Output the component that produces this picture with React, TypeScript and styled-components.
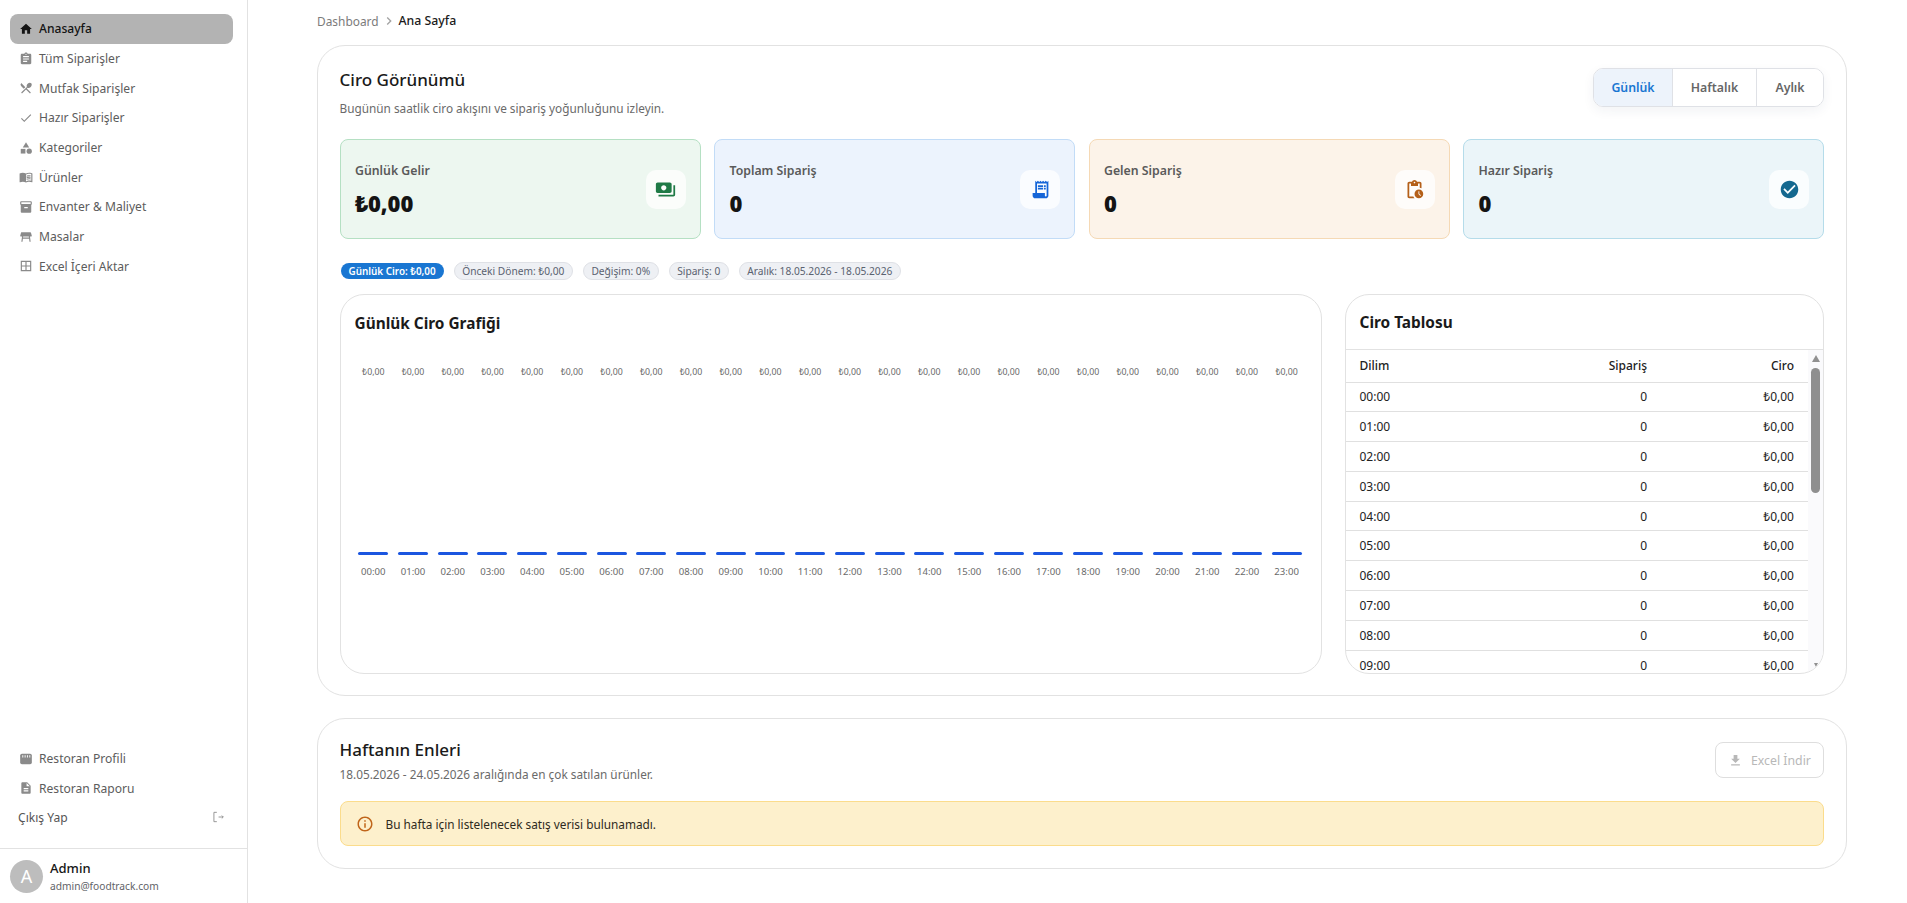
import React from 'react'
import styled, { createGlobalStyle } from 'styled-components'
import {
  MdHome,
  MdAssignment,
  MdRestaurantMenu,
  MdCheck,
  MdCategory,
  MdMenuBook,
  MdInventory2,
  MdTableRestaurant,
  MdBorderAll,
  MdDescription,
  MdPayments,
  MdReceiptLong,
  MdPendingActions,
  MdCheckCircle,
  MdInfoOutline,
  MdDownload,
  MdChevronRight,
} from 'react-icons/md'

const GlobalStyle = createGlobalStyle`
  html, body {
    margin: 0;
    height: 100%;
    overflow: hidden;
    background: #fff;
    font-family: "Noto Sans", "Open Sans", "Liberation Sans", sans-serif;
    color: #1c1c1c;
  }
  * {
    box-sizing: border-box;
  }
`

const Page = styled.div`
  display: flex;
  height: 903px;
`

const Sidebar = styled.aside`
  flex: 0 0 248px;
  display: flex;
  flex-direction: column;
  border-right: 1px solid #e2e2e2;
`

const NavList = styled.nav`
  display: flex;
  flex-direction: column;
  padding: 14px 14px 0 10px;
`

const BottomNav = styled(NavList)`
  margin-top: auto;
  padding-top: 0;
  padding-bottom: 16px;
`

const NavItem = styled.a<{ $active?: boolean }>`
  display: flex;
  align-items: center;
  gap: 6px;
  height: 29.7px;
  padding-left: 9px;
  border-radius: 8px;
  font-size: 12.1px;
  color: ${(p) => (p.$active ? '#141414' : '#5c5c5c')};
  background: ${(p) => (p.$active ? '#b3b3b3' : 'transparent')};
  font-weight: ${(p) => (p.$active ? 500 : 400)};
  svg {
    flex: none;
    font-size: 14px;
    color: ${(p) => (p.$active ? '#141414' : '#8a8a8a')};
  }
`

const LogoutRow = styled(NavItem)`
  justify-content: space-between;
  padding: 0 8px 0 8px;
  color: #555;
  margin-top: -1px;
`

const UserBlock = styled.div`
  display: flex;
  align-items: center;
  gap: 7px;
  height: 55px;
  padding: 0 10px;
  border-top: 1px solid #e2e2e2;
`

const Avatar = styled.div`
  flex: none;
  display: flex;
  align-items: center;
  justify-content: center;
  width: 33px;
  height: 33px;
  border-radius: 50%;
  background: #bdbdbd;
  color: #fff;
  font-size: 18px;
`

const UserName = styled.div`
  padding-top: 2px;
  font-size: 13px;
  font-weight: 500;
  line-height: 18px;
  color: #151515;
`

const UserMail = styled.div`
  font-size: 10.2px;
  line-height: 18px;
  color: #5f6368;
`

const Main = styled.main`
  flex: 1;
  min-width: 0;
  padding: 12px 60px 0 69px;
`

const Breadcrumb = styled.div`
  display: flex;
  align-items: center;
  height: 17px;
  margin-bottom: 16px;
  font-size: 11.9px;
  color: #7b7b7b;
  svg {
    margin: 0 2px;
    font-size: 16px;
    color: #a3a3a3;
  }
`

const Crumb = styled.span`
  font-size: 12.3px;
  color: #1b1b1b;
  font-weight: 500;
`

const Section = styled.section`
  border: 1px solid #e2e2e2;
  border-radius: 28px;
  padding: 22px 22px 21px 21.5px;
  background: #fff;
`

const WeeklySection = styled(Section)`
  margin-top: 22px;
  padding-top: 19px;
  padding-bottom: 22px;
`

const SectionHead = styled.header`
  display: flex;
  align-items: flex-start;
  justify-content: space-between;
`

const SectionTitle = styled.h2`
  margin: 0;
  font-size: 17px;
  line-height: 24px;
  font-weight: 500;
  color: #1a1a1a;
`

const SectionNote = styled.p<{ $gap: number }>`
  margin: ${(p) => p.$gap}px 0 0;
  font-size: 11.8px;
  line-height: 16px;
  color: #6a6a6a;
`

const Segment = styled.div`
  display: flex;
  height: 39px;
  border: 1px solid #dfe1e6;
  border-radius: 10px;
  overflow: hidden;
  box-shadow: 0 4px 12px rgba(30, 50, 90, 0.06);
`

const SegmentButton = styled.button<{ $active?: boolean; $width: number }>`
  width: ${(p) => p.$width}px;
  padding: 0;
  border: 0;
  border-left: 1px solid #dfe1e6;
  background: ${(p) => (p.$active ? '#edf3fb' : '#fff')};
  color: ${(p) => (p.$active ? '#1976d2' : '#666')};
  font: inherit;
  font-size: 12.3px;
  font-weight: 600;
  &:first-child {
    border-left: 0;
  }
`

const StatGrid = styled.div`
  display: grid;
  grid-template-columns: repeat(4, 1fr);
  gap: 13.5px;
  margin-top: 23px;
`

const tones = {
  green: { bg: '#edf7f0', line: '#b5e0c3', icon: '#1f7a46' },
  blue: { bg: '#ecf3fd', line: '#c2dcf7', icon: '#1565d8' },
  orange: { bg: '#fcf3e9', line: '#f5d9b5', icon: '#b45f18' },
  teal: { bg: '#ebf5f9', line: '#b5dcea', icon: '#14688f' },
}

type Tone = keyof typeof tones

const StatCard = styled.div<{ $tone: Tone }>`
  display: flex;
  align-items: center;
  justify-content: space-between;
  height: 100px;
  padding: 0 14px 0 14.5px;
  border: 1px solid ${(p) => tones[p.$tone].line};
  border-radius: 8px;
  background: ${(p) => tones[p.$tone].bg};
`

const StatLabel = styled.div`
  font-size: 12.3px;
  font-weight: 600;
  line-height: 17px;
  color: #5a5a5a;
`

const StatValue = styled.div`
  margin-top: 11px;
  font-size: 22px;
  font-weight: 900;
  line-height: 27px;
  color: #141414;
`

const StatIcon = styled.div<{ $tone: Tone }>`
  display: flex;
  align-items: center;
  justify-content: center;
  width: 40px;
  height: 39px;
  margin-top: 1px;
  border-radius: 10px;
  background: rgba(255, 255, 255, 0.75);
  font-size: 21px;
  color: ${(p) => tones[p.$tone].icon};
`

const ChipRow = styled.div`
  display: flex;
  align-items: center;
  gap: 10px;
  margin-top: 23px;
`

const Chip = styled.span<{ $primary?: boolean }>`
  display: flex;
  align-items: center;
  height: ${(p) => (p.$primary ? 16 : 18)}px;
  margin-left: ${(p) => (p.$primary ? 1 : 0)}px;
  padding: 0 ${(p) => (p.$primary ? 8 : 7.5)}px;
  border: ${(p) => (p.$primary ? '0' : '1px solid #dfe1e6')};
  border-radius: 9px;
  background: ${(p) => (p.$primary ? '#1976d2' : '#eef0f4')};
  color: ${(p) => (p.$primary ? '#fff' : '#5a6270')};
  font-size: ${(p) => (p.$primary ? 9.9 : 10.2)}px;
  font-weight: ${(p) => (p.$primary ? 600 : 400)};
  white-space: nowrap;
`

const ChartRow = styled.div`
  display: grid;
  grid-template-columns: 982px 1fr;
  gap: 23px;
  margin-top: 14px;
`

const Panel = styled.div`
  height: 380px;
  border: 1px solid #e2e2e2;
  border-radius: 24px;
  overflow: hidden;
  background: #fff;
`

const ChartPanel = styled(Panel)`
  padding: 18px 14px 0 13px;
`

const PanelTitle = styled.h3`
  margin: 0;
  font-size: 15.4px;
  line-height: 22px;
  font-weight: 700;
  color: #1a1a1a;
`

const ChartTitle = styled(PanelTitle)`
  margin-left: 1px;
`

const TablePanel = styled(Panel)`
  display: flex;
  flex-direction: column;
`

const TableHead = styled.div`
  flex: none;
  height: 55px;
  padding: 17px 14px 0;
  border-bottom: 1px solid #e2e2e2;
`

const ChartColumns = styled.div`
  display: grid;
  grid-template-columns: repeat(24, 1fr);
  height: 214px;
  margin-top: 30px;
`

const ChartColumn = styled.div`
  display: flex;
  flex-direction: column;
  align-items: center;
`

const BarValue = styled.span`
  font-size: 8.8px;
  line-height: 14px;
  color: #6a6a6a;
`

const Bar = styled.span`
  width: 30px;
  height: 3px;
  margin-top: auto;
  border-radius: 2px;
  background: #1b56e0;
`

const BarTime = styled.span`
  margin-top: 10px;
  font-size: 9.6px;
  line-height: 14px;
  color: #6a6a6a;
`

const TableBody = styled.div`
  flex: 1;
  min-height: 0;
  display: flex;
`

const TableRows = styled.div`
  flex: 1;
  min-width: 0;
  overflow: hidden;
`

const ScrollRail = styled.div`
  flex: 0 0 15px;
  display: flex;
  flex-direction: column;
  align-items: center;
  background: #fafafc;
`

const ArrowUp = styled.span`
  flex: none;
  width: 0;
  height: 0;
  margin-top: 5px;
  border: solid transparent;
  border-width: 0 4.5px 7px;
  border-bottom-color: #909090;
`

const ScrollThumb = styled.span`
  flex: none;
  width: 9px;
  height: 125px;
  margin-top: 6px;
  border-radius: 5px;
  background: #8f8f8f;
`

const ArrowDown = styled.span`
  flex: none;
  width: 0;
  height: 0;
  margin-top: auto;
  margin-bottom: 6px;
  border: solid transparent;
  border-width: 4px 2.5px 0;
  border-top-color: #909090;
`

const Row = styled.div<{ $head?: boolean }>`
  display: grid;
  grid-template-columns: 1fr 130px 147px;
  align-items: center;
  height: ${(p) => (p.$head ? 32.5 : 29.8)}px;
  padding: 0 14px;
  border-bottom: 1px solid #e0e0e0;
  font-size: 12px;
  font-weight: ${(p) => (p.$head ? 500 : 400)};
  color: #222;
`

const NumCell = styled.span`
  text-align: right;
`

const WeeklyHead = styled(SectionHead)`
  align-items: center;
`

const ExcelButton = styled.button`
  display: flex;
  align-items: center;
  gap: 8px;
  width: 109px;
  height: 36px;
  padding: 0 0 0 12px;
  border: 1px solid #dedede;
  border-radius: 8px;
  background: #fff;
  color: #b8b8b8;
  font: inherit;
  font-size: 12.3px;
  svg {
    font-size: 15px;
  }
`

const Alert = styled.div`
  display: flex;
  align-items: center;
  gap: 12px;
  height: 45px;
  margin-top: 19px;
  padding: 0 15px;
  border: 1px solid #fbdc8c;
  border-radius: 8px;
  background: #fdf0cc;
  font-size: 11.8px;
  color: #2e2a20;
  svg {
    font-size: 18px;
    color: #c0651a;
  }
`

function StoreIcon(): React.ReactElement {
  return (
    <svg width="14" height="14" viewBox="0 0 24 24" aria-hidden="true">
      <rect x="2" y="3" width="20" height="18" rx="3" fill="currentColor" />
      <path d="M6.500 5.500v4M10.500 5.500v4M14.500 5.500v4M18.500 5.500v4" stroke="#fff" strokeWidth="1.600" />
    </svg>
  )
}

function ExitIcon(): React.ReactElement {
  return (
    <svg width="14" height="14" viewBox="0 0 24 24" fill="none" stroke="currentColor" strokeWidth="1.500" aria-hidden="true">
      <path d="M10 4H5v16h5" />
      <path d="M13 12h8M18.500 9.500 21 12l-2.500 2.500" />
    </svg>
  )
}

const mainNav = [
  { label: 'Anasayfa', icon: MdHome, active: true },
  { label: 'Tüm Siparişler', icon: MdAssignment },
  { label: 'Mutfak Siparişler', icon: MdRestaurantMenu },
  { label: 'Hazır Siparişler', icon: MdCheck },
  { label: 'Kategoriler', icon: MdCategory },
  { label: 'Ürünler', icon: MdMenuBook },
  { label: 'Envanter & Maliyet', icon: MdInventory2 },
  { label: 'Masalar', icon: MdTableRestaurant },
  { label: 'Excel İçeri Aktar', icon: MdBorderAll },
]

const stats: { label: string; value: string; tone: Tone; icon: React.ElementType }[] = [
  { label: 'Günlük Gelir', value: '₺0,00', tone: 'green', icon: MdPayments },
  { label: 'Toplam Sipariş', value: '0', tone: 'blue', icon: MdReceiptLong },
  { label: 'Gelen Sipariş', value: '0', tone: 'orange', icon: MdPendingActions },
  { label: 'Hazır Sipariş', value: '0', tone: 'teal', icon: MdCheckCircle },
]

const chips = ['Önceki Dönem: ₺0,00', 'Değişim: 0%', 'Sipariş: 0', 'Aralık: 18.05.2026 - 18.05.2026']

const hours = Array.from({ length: 24 }, (_, i) => `${String(i).padStart(2, '0')}:00`)

export default function App(): React.ReactElement {
  return (
    <Page>
      <GlobalStyle />
      <Sidebar>
        <NavList>
          {mainNav.map(({ label, icon: Icon, active }) => (
            <NavItem key={label} $active={active}>
              <Icon />
              {label}
            </NavItem>
          ))}
        </NavList>
        <BottomNav>
          <NavItem>
            <StoreIcon />
            Restoran Profili
          </NavItem>
          <NavItem>
            <MdDescription />
            Restoran Raporu
          </NavItem>
          <LogoutRow>
            Çıkış Yap
            <ExitIcon />
          </LogoutRow>
        </BottomNav>
        <UserBlock>
          <Avatar>A</Avatar>
          <div>
            <UserName>Admin</UserName>
            <UserMail>admin@foodtrack.com</UserMail>
          </div>
        </UserBlock>
      </Sidebar>
      <Main>
        <Breadcrumb>
          Dashboard
          <MdChevronRight />
          <Crumb>Ana Sayfa</Crumb>
        </Breadcrumb>
        <Section>
          <SectionHead>
            <div>
              <SectionTitle>Ciro Görünümü</SectionTitle>
              <SectionNote $gap={8}>Bugünün saatlik ciro akışını ve sipariş yoğunluğunu izleyin.</SectionNote>
            </div>
            <Segment>
              <SegmentButton $active $width={78}>Günlük</SegmentButton>
              <SegmentButton $width={84}>Haftalık</SegmentButton>
              <SegmentButton $width={67}>Aylık</SegmentButton>
            </Segment>
          </SectionHead>
          <StatGrid>
            {stats.map(({ label, value, tone, icon: Icon }) => (
              <StatCard key={label} $tone={tone}>
                <div>
                  <StatLabel>{label}</StatLabel>
                  <StatValue>{value}</StatValue>
                </div>
                <StatIcon $tone={tone}>
                  <Icon />
                </StatIcon>
              </StatCard>
            ))}
          </StatGrid>
          <ChipRow>
            <Chip $primary>Günlük Ciro: ₺0,00</Chip>
            {chips.map((chip) => (
              <Chip key={chip}>{chip}</Chip>
            ))}
          </ChipRow>
          <ChartRow>
            <ChartPanel>
              <ChartTitle>Günlük Ciro Grafiği</ChartTitle>
              <ChartColumns>
                {hours.map((hour) => (
                  <ChartColumn key={hour}>
                    <BarValue>₺0,00</BarValue>
                    <Bar />
                    <BarTime>{hour}</BarTime>
                  </ChartColumn>
                ))}
              </ChartColumns>
            </ChartPanel>
            <TablePanel>
              <TableHead>
                <PanelTitle>Ciro Tablosu</PanelTitle>
              </TableHead>
              <TableBody>
                <TableRows>
                  <Row $head>
                    <span>Dilim</span>
                    <NumCell>Sipariş</NumCell>
                    <NumCell>Ciro</NumCell>
                  </Row>
                  {hours.slice(0, 10).map((hour) => (
                    <Row key={hour}>
                      <span>{hour}</span>
                      <NumCell>0</NumCell>
                      <NumCell>₺0,00</NumCell>
                    </Row>
                  ))}
                </TableRows>
                <ScrollRail>
                  <ArrowUp />
                  <ScrollThumb />
                  <ArrowDown />
                </ScrollRail>
              </TableBody>
            </TablePanel>
          </ChartRow>
        </Section>
        <WeeklySection>
          <WeeklyHead>
            <div>
              <SectionTitle>Haftanın Enleri</SectionTitle>
              <SectionNote $gap={4}>18.05.2026 - 24.05.2026 aralığında en çok satılan ürünler.</SectionNote>
            </div>
            <ExcelButton disabled>
              <MdDownload />
              Excel İndir
            </ExcelButton>
          </WeeklyHead>
          <Alert>
            <MdInfoOutline />
            Bu hafta için listelenecek satış verisi bulunamadı.
          </Alert>
        </WeeklySection>
      </Main>
    </Page>
  )
}
